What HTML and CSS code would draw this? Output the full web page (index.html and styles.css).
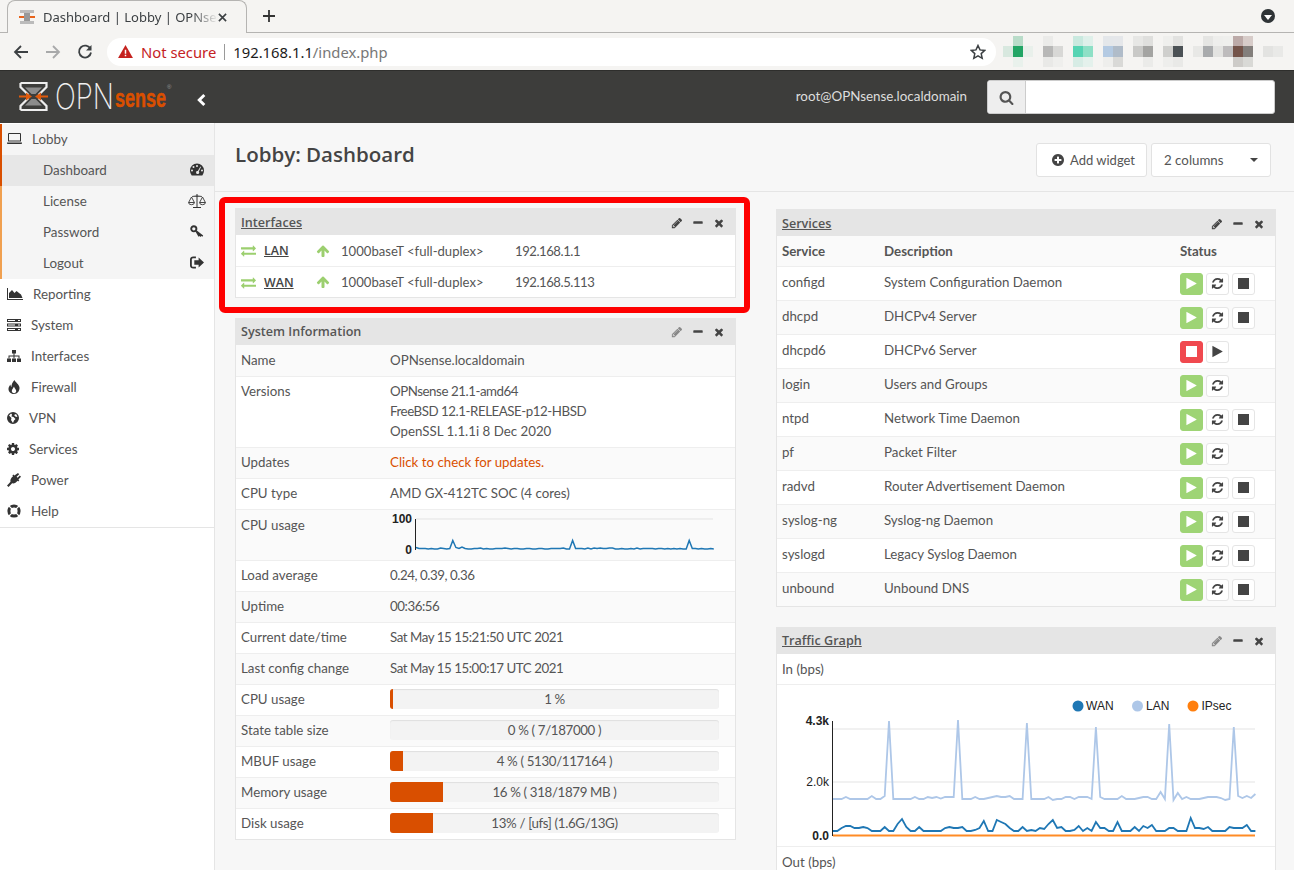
FILE: index.html
```html
<!DOCTYPE html>
<html lang="en">
<head>
    <meta charset="UTF-8">
    <meta name="viewport" content="width=device-width, initial-scale=1.0">
    <title>Dashboard | Lobby | OPNsense</title>
    <link rel="stylesheet" href="styles.css">
</head>
<body>

    <!-- Icon set -->
    <svg class="sprite" xmlns="http://www.w3.org/2000/svg">
        <symbol id="i-times" viewBox="0 0 1792 1792"><path d="M1490 1322q0 40-28 68l-136 136q-28 28-68 28t-68-28l-294-294-294 294q-28 28-68 28t-68-28l-136-136q-28-28-28-68t28-68l294-294-294-294q-28-28-28-68t28-68l136-136q28-28 68-28t68 28l294 294 294-294q28-28 68-28t68 28l136 136q28 28 28 68t-28 68l-294 294 294 294q28 28 28 68z"/></symbol>
        <symbol id="i-search" viewBox="0 0 1792 1792"><path d="M1216 832q0-185-131.5-316.5t-316.5-131.5-316.5 131.5-131.5 316.5 131.5 316.5 316.5 131.5 316.5-131.5 131.5-316.5zm512 832q0 52-38 90t-90 38q-54 0-90-38l-343-342q-179 124-399 124-143 0-273.5-55.5t-225-150-150-225-55.5-273.5 55.5-273.5 150-225 225-150 273.5-55.5 273.5 55.5 225 150 150 225 55.5 273.5q0 220-124 399l343 343q37 37 37 90z"/></symbol>
        <symbol id="i-refresh" viewBox="0 0 1792 1792"><path d="M1639 1056q0 5-1 7-64 268-268 434.5t-478 166.5q-146 0-282.5-55t-243.5-157l-129 129q-19 19-45 19t-45-19-19-45v-448q0-26 19-45t45-19h448q26 0 45 19t19 45-19 45l-137 137q71 66 161 102t187 36q134 0 250-65t186-179q11-17 53-117 8-23 30-23h192q13 0 22.5 9.5t9.5 22.5zm25-800v448q0 26-19 45t-45 19h-448q-26 0-45-19t-19-45 19-45l138-138q-148-137-349-137-134 0-250 65t-186 179q-11 17-53 117-8 23-30 23h-199q-13 0-22.5-9.5t-9.5-22.5v-7q65-268 270-434.5t480-166.5q146 0 284 55.5t245 156.5l130-129q19-19 45-19t45 19 19 45z"/></symbol>
        <symbol id="i-pencil" viewBox="0 0 1792 1792"><path d="M491 1536l91-91-235-235-91 91v107h128v128h107zm523-928q0-22-22-22-10 0-17 7l-542 542q-7 7-7 17 0 22 22 22 10 0 17-7l542-542q7-7 7-17zm-54-192l416 416-832 832h-416v-416zm683 96q0 53-37 90l-166 166-416-416 166-165q36-38 90-38 53 0 91 38l235 234q37 39 37 91z"/></symbol>
        <symbol id="i-minus" viewBox="0 0 1792 1792"><path d="M1600 736v192q0 40-28 68t-68 28h-1216q-40 0-68-28t-28-68v-192q0-40 28-68t68-28h1216q40 0 68 28t28 68z"/></symbol>
        <symbol id="i-play" viewBox="0 0 1792 1792"><path d="M1576 927l-1328 738q-23 13-39.5 3t-16.5-36v-1472q0-26 16.5-36t39.5 3l1328 738q23 13 23 31t-23 31z"/></symbol>
        <symbol id="i-up" viewBox="0 0 1792 1792"><path d="M1675 971q0 51-37 90l-75 75q-38 38-91 38-54 0-90-38l-294-293v704q0 52-37.5 84.5t-90.5 32.5h-128q-53 0-90.5-32.5t-37.5-84.5v-704l-294 293q-36 38-90 38t-90-38l-75-75q-38-38-38-90 0-53 38-91l651-651q35-37 90-37 54 0 91 37l651 651q37 39 37 91z"/></symbol>
        <symbol id="i-exchange" viewBox="0 0 1792 1792"><path d="M1792 1184v192q0 13-9.5 22.5t-22.5 9.5h-1376v192q0 13-9.5 22.5t-22.5 9.5q-12 0-24-10l-319-320q-9-9-9-22 0-14 9-23l320-320q9-9 23-9 13 0 22.5 9.5t9.5 22.5v192h1376q13 0 22.5 9.5t9.5 22.5zm0-544q0 14-9 23l-320 320q-9 9-23 9-13 0-22.5-9.5t-9.5-22.5v-192h-1376q-13 0-22.5-9.5t-9.5-22.5v-192q0-13 9.5-22.5t22.5-9.5h1376v-192q0-14 9-23t23-9q12 0 24 10l319 319q9 9 9 23z"/></symbol>
        <symbol id="i-plus" viewBox="0 0 1792 1792"><path d="M1344 960v-128q0-26-19-45t-45-19h-256v-256q0-26-19-45t-45-19h-128q-26 0-45 19t-19 45v256h-256q-26 0-45 19t-19 45v128q0 26 19 45t45 19h256v256q0 26 19 45t45 19h128q26 0 45-19t19-45v-256h256q26 0 45-19t19-45zm320-64q0 209-103 385.5t-279.5 279.5-385.5 103-385.5-103-279.5-279.5-103-385.5 103-385.5 279.5-279.5 385.5-103 385.5 103 279.5 279.5 103 385.5z"/></symbol>
        <symbol id="i-cog" viewBox="128 128 1536 1536"><path d="M1152 896q0-106-75-181t-181-75-181 75-75 181 75 181 181 75 181-75 75-181zm512-109v222q0 12-8 23t-20 13l-185 28q-19 54-39 91 35 50 107 138 10 12 10 25t-9 23q-27 37-99 108t-94 71q-12 0-26-9l-138-108q-44 23-91 38-16 136-29 186-7 28-36 28h-222q-14 0-24.5-8.5t-11.5-21.5l-28-184q-49-16-90-37l-141 107q-10 9-25 9-14 0-25-11-126-114-165-168-7-10-7-23 0-12 8-23 15-21 51-66.5t54-70.5q-27-50-41-99l-183-27q-13-2-21-12.5t-8-23.5v-222q0-12 8-23t19-13l186-28q14-46 39-92-40-57-107-138-10-12-10-24 0-10 9-23 26-36 98.5-107.5t94.5-71.5q13 0 26 10l138 107q44-23 91-38 16-136 29-186 7-28 36-28h222q14 0 24.5 8.5t11.5 21.5l28 184q49 16 90 37l142-107q9-9 24-9 13 0 25 10 129 119 165 170 7 8 7 22 0 12-8 23-15 21-51 66.5t-54 70.5q26 50 41 98l183 28q13 2 21 12.5t8 23.5z"/></symbol>
        <symbol id="i-laptop" viewBox="0 0 15 12"><path d="M2 0h11a1 1 0 0 1 1 1v7.500H1V1a1 1 0 0 1 1-1zm0 1v6.500h11V1zM0 9.600h15v.6a.8.8 0 0 1-.8.8H.8a.8.8 0 0 1-.8-.8z"/></symbol>
        <symbol id="i-area" viewBox="0 0 16 12"><path d="M0 0h1v11h15v1H0z"/><path d="M2 10V5l3-3 2.500 3 2-2 2.500 2 2 1.500 1.500 3.500z"/></symbol>
        <symbol id="i-server" viewBox="0 0 14 12"><path d="M0 0h14v3H0zM0 4.500h14v3H0zM0 9h14v3H0z"/><path fill="#fff" d="M1 1h7v1H1zM11 1h2v1h-2zM1 5.500h7v1H1zM11 5.500h2v1h-2zM1 10h7v1H1zM11 10h2v1h-2z"/></symbol>
        <symbol id="i-sitemap" viewBox="0 0 14 12"><path d="M5 0h4v3.500H7.500v2H12.500v3H11.500v-2H7.500v2h-1v-2H2.500v2h-1v-3H6.500v-2H5z"/><path d="M0 8.500h4V12H0zM5 8.500h4V12H5zM10 8.500h4V12h-4z"/></symbol>
        <symbol id="i-fire" viewBox="0 0 12 14"><path fill-rule="evenodd" d="M6.500 0c1 2.500 4.500 4 5 7.500.3 3-2 6.500-5.500 6.500C2.500 14 .2 11.300.5 8.500.7 6.800 1.800 5.500 2.500 4.500c0 1.200.3 2 1 2.500C3.200 4.500 4.800 2 6.500 0zM6 6.500c-.5 1.500-2.200 2.700-2.200 4.500 0 1.300 1 2.200 2.200 2.200s2.400-1 2.200-2.400C8 9.300 6.400 8.200 6 6.500z"/></symbol>
        <symbol id="i-globe" viewBox="0 0 12 12"><path fill-rule="evenodd" d="M6 0a6 6 0 1 1 0 12A6 6 0 0 1 6 0zM2 3.500 4.500 6 4 8l2 3 1-2.500L8.500 7 6.500 5 4.500 4.500 5 2.500 4 1.500zM9 2 7 3l2 2 1.500-.5z"/></symbol>
        <symbol id="i-plug" viewBox="0 0 14 14"><path d="M11 0l1.200 1.200-2.600 2.600 1 1 2.200-2.200L14 3.800l-2.600 2.600.9.900-1.100 1.100-.6-.6c-1.500 2-3.500 3-5.500 2.500L3 12.500 1.500 14 0 12.500 1.500 11l2-2.200C3 6.800 4 4.800 6 3.200l-.6-.6 1.100-1.100.9.900z"/></symbol>
        <symbol id="i-life" viewBox="0 0 14 14"><circle cx="7" cy="7" r="5.100" fill="none" stroke="currentColor" stroke-width="3"/><path fill="none" stroke="#fff" stroke-width="1.100" d="M2 2l3 3M12 2 9 5M2 12l3-3M12 12 9 9"/></symbol>
        <symbol id="i-gauge" viewBox="0 0 14 12"><path fill-rule="evenodd" d="M7 0a7 7 0 0 1 7 7c0 1.800-.6 3.500-1.700 5H1.700A7.600 7.600 0 0 1 0 7a7 7 0 0 1 7-7zM3.500 2.500a1 1 0 1 0 0 2 1 1 0 0 0 0-2zM7 1.500a1 1 0 1 0 0 2 1 1 0 0 0 0-2zM2 6a1 1 0 1 0 0 2 1 1 0 0 0 0-2zM12 6a1 1 0 1 0 0 2 1 1 0 0 0 0-2zM10.500 3 7.800 7.500a1.500 1.500 0 1 0 1 .6l2.200-4.600z"/></symbol>
        <symbol id="i-scale" viewBox="0 0 18 14"><path d="M8.500 0h1v1.500l4.500.500v.8h-4.500V13H13v1H5v-1h3.500V2.800H4V2l4.500-.5z"/><path fill="none" stroke="currentColor" stroke-width=".9" d="M.6 8.500 3.500 3l2.900 5.500zM.6 8.500a2.900 2.200 0 0 0 5.800 0M11.600 8.500 14.500 3l2.900 5.500zM11.600 8.500a2.900 2.200 0 0 0 5.800 0"/></symbol>
        <symbol id="i-key" viewBox="0 0 14 13"><circle cx="3.800" cy="3.800" r="2.600" fill="none" stroke="currentColor" stroke-width="1.900"/><path d="M5.600 6.800l1.200-1.200 6.400 5-.8 1.200-1.100-.8-.9 1-1-1-.9.800z"/></symbol>
        <symbol id="i-signout" viewBox="0 0 13 11"><path d="M3 0h2.500v1.500H3c-.8 0-1.300.5-1.300 1.300v5.400c0 .8.500 1.300 1.300 1.300h2.500V11H3C1.300 11 0 9.800 0 8.200V2.800C0 1.200 1.300 0 3 0z"/><path d="M8 .8 13 5.500 8 10.200V7.500H4v-4h4z"/></symbol>
    </svg>

    <!-- Browser chrome -->
    <div class="tabstrip">
        <div class="tab">
            <svg class="favicon" viewBox="0 0 16 16">
                <path fill="#bbb" d="M1 1h14v3H1zM1 12h14v3H1z"/>
                <path fill="#999" d="M5 4h6v8H5z"/>
                <path fill="#e8641c" d="M0 7h5v2H0zM11 7h5v2h-5z"/>
            </svg>
            <span class="tab-title">Dashboard | Lobby | OPNsense</span>
            <svg class="tab-close" viewBox="0 0 10 10"><path d="M1 1l8 8M9 1l-8 8"/></svg>
        </div>
        <svg class="tab-new" viewBox="0 0 12 12"><path d="M6 0v12M0 6h12"/></svg>
        <div class="tab-menu"><span class="tab-menu-caret"></span></div>
    </div>
    <div class="toolbar">
        <svg class="tool" viewBox="0 0 16 16"><path d="M15 8H2M8 2 2 8l6 6"/></svg>
        <svg class="tool tool-off" viewBox="0 0 16 16"><path d="M1 8h13M8 2l6 6-6 6"/></svg>
        <svg class="tool" viewBox="0 0 16 16"><path d="M13.500 5A6 6 0 1 0 14 8.500"/><path class="tool-fill" d="M14.500 1v5.500H9z"/></svg>
        <div class="omnibox">
            <svg class="warn" viewBox="0 0 16 14"><path fill="#c5221f" d="M8 0l8 14H0z"/><path fill="#fff" d="M7.200 5h1.600v4.500H7.200zM7.200 10.500h1.600V12H7.200z"/></svg>
            <span class="not-secure">Not secure</span>
            <span class="omni-sep"></span>
            <span class="url">192.168.1.1<span class="url-path">/index.php</span></span>
            <svg class="star" viewBox="0 0 16 16"><path d="M8 1.500l2 4.400 4.800.5-3.600 3.200 1 4.700L8 11.900l-4.200 2.400 1-4.700L1.200 6.400 6 5.900z"/></svg>
        </div>
        <svg class="extensions" viewBox="0 0 280 31">
            <g id="mosaic">
                <rect x="0" y="10" width="10" height="11" fill="#d8e8df"/>
                <rect x="10" y="0" width="10" height="10" fill="#b9dcc9"/><rect x="10" y="10" width="10" height="11" fill="#22a565"/><rect x="10" y="21" width="10" height="10" fill="#e9f1ec"/>
                <rect x="20" y="10" width="10" height="11" fill="#e9f0eb"/>
                <rect x="40" y="0" width="10" height="10" fill="#ebebe9"/><rect x="40" y="10" width="10" height="11" fill="#b8b8b7"/><rect x="40" y="21" width="10" height="10" fill="#e9e9e7"/>
                <rect x="50" y="10" width="10" height="11" fill="#d8d8d6"/><rect x="50" y="21" width="10" height="10" fill="#efefed"/>
                <rect x="70" y="0" width="10" height="10" fill="#c9e9df"/><rect x="70" y="10" width="10" height="11" fill="#55d4b3"/><rect x="70" y="21" width="10" height="10" fill="#d7ece5"/>
                <rect x="80" y="0" width="10" height="10" fill="#dff0ea"/><rect x="80" y="10" width="10" height="11" fill="#8ee0c6"/><rect x="80" y="21" width="10" height="10" fill="#e4f1ec"/>
                <rect x="100" y="0" width="10" height="10" fill="#e4e7ea"/><rect x="100" y="10" width="10" height="11" fill="#b4cae2"/><rect x="100" y="21" width="10" height="10" fill="#eeeeec"/>
                <rect x="110" y="0" width="10" height="10" fill="#e5e7ea"/><rect x="110" y="10" width="10" height="11" fill="#b0bcc9"/><rect x="110" y="21" width="10" height="10" fill="#d9d9d7"/>
                <rect x="130" y="0" width="10" height="10" fill="#e7e7e5"/><rect x="130" y="10" width="10" height="11" fill="#c9c9c7"/>
                <rect x="140" y="0" width="10" height="10" fill="#dfdfdd"/><rect x="140" y="10" width="10" height="11" fill="#a4a4a2"/><rect x="140" y="21" width="10" height="10" fill="#ebebe9"/>
                <rect x="160" y="0" width="10" height="10" fill="#efefed"/><rect x="160" y="10" width="10" height="11" fill="#cfcfcd"/><rect x="160" y="21" width="10" height="10" fill="#eeeeec"/>
                <rect x="170" y="0" width="10" height="10" fill="#e2e2e0"/><rect x="170" y="10" width="10" height="11" fill="#4b5155"/><rect x="170" y="21" width="10" height="10" fill="#e9e9e7"/>
                <rect x="190" y="10" width="10" height="11" fill="#e8e8e6"/>
                <rect x="200" y="0" width="10" height="10" fill="#e5e5e3"/><rect x="200" y="10" width="10" height="11" fill="#a9abad"/>
                <rect x="210" y="0" width="10" height="10" fill="#eeeeec"/><rect x="210" y="10" width="10" height="11" fill="#e3e3e1"/>
                <rect x="220" y="0" width="10" height="10" fill="#efefed"/><rect x="220" y="10" width="10" height="11" fill="#bebcbd"/>
                <rect x="230" y="0" width="10" height="10" fill="#bcaaa8"/><rect x="230" y="10" width="10" height="11" fill="#735349"/><rect x="230" y="21" width="10" height="10" fill="#cdcbc8"/>
                <rect x="240" y="0" width="10" height="10" fill="#d7ccc9"/><rect x="240" y="10" width="10" height="11" fill="#837f7c"/><rect x="240" y="21" width="10" height="10" fill="#d9d9d6"/>
                <rect x="260" y="10" width="10" height="11" fill="#e3e3e1"/>
                <rect x="270" y="10" width="10" height="11" fill="#e9e9e7"/>
            </g>
        </svg>
    </div>

    <!-- Top navigation -->
    <header class="navbar">
        <svg class="logo" viewBox="0 0 160 36">
            <path fill="none" stroke="#eee" stroke-width="2.200" d="M1.500 2h26v4l-8 8M1.500 2v4l8 8M1.500 29h26v-4l-8-8M1.500 29v-4l8-8"/>
            <path fill="#8c8c8c" d="M6 6.500h17l-6.500 6.500h-4zM12.500 18h4l6.500 6.500H6z"/>
            <path fill="#e05a0c" d="M0 14.500h7V11.500l6 4-6 4V16.500H0zM29 14.500h-7V11.500l-6 4 6 4V16.500h7z"/>
            <text class="logo-opn" x="36" y="28" textLength="59" lengthAdjust="spacingAndGlyphs">OPN</text>
            <text class="logo-sense" x="96" y="26" textLength="51" lengthAdjust="spacingAndGlyphs">sense</text>
            <text class="logo-reg" x="148" y="8">®</text>
        </svg>
        <svg class="collapse" viewBox="0 0 8 12"><path d="M6.500 1.500 2 6l4.500 4.500"/></svg>
        <span class="navbar-user">root@OPNsense.localdomain</span>
        <div class="search">
            <span class="search-addon"><svg class="icon-search"><use href="#i-search"/></svg></span>
            <span class="search-input"></span>
        </div>
    </header>

    <div class="main">
        <!-- Sidebar -->
        <nav class="sidebar">
            <div class="nav-group">
                <a class="nav-item nav-open"><svg class="nav-icon w15"><use href="#i-laptop"/></svg>Lobby</a>
                <a class="sub-item sub-active">Dashboard<svg class="sub-icon"><use href="#i-gauge"/></svg></a>
                <a class="sub-item">License<svg class="sub-icon sub-wide"><use href="#i-scale"/></svg></a>
                <a class="sub-item">Password<svg class="sub-icon"><use href="#i-key"/></svg></a>
                <a class="sub-item">Logout<svg class="sub-icon"><use href="#i-signout"/></svg></a>
            </div>
            <a class="nav-item"><svg class="nav-icon w16"><use href="#i-area"/></svg>Reporting</a>
            <a class="nav-item"><svg class="nav-icon w14"><use href="#i-server"/></svg>System</a>
            <a class="nav-item"><svg class="nav-icon w14"><use href="#i-sitemap"/></svg>Interfaces</a>
            <a class="nav-item"><svg class="nav-icon w14 tall"><use href="#i-fire"/></svg>Firewall</a>
            <a class="nav-item"><svg class="nav-icon w12"><use href="#i-globe"/></svg>VPN</a>
            <a class="nav-item"><svg class="nav-icon w12"><use href="#i-cog"/></svg>Services</a>
            <a class="nav-item"><svg class="nav-icon w14 tall"><use href="#i-plug"/></svg>Power</a>
            <a class="nav-item"><svg class="nav-icon w14 tall"><use href="#i-life"/></svg>Help</a>
        </nav>

        <div class="content">
            <div class="page-head">
                <h1 class="page-title">Lobby: Dashboard</h1>
                <div class="page-actions">
                    <button class="btn btn-add"><svg class="icon-plus"><use href="#i-plus"/></svg>Add widget</button>
                    <button class="btn btn-cols">2 columns<span class="caret"></span></button>
                </div>
            </div>

            <div class="columns">
                <div class="col">
                    <div class="highlight">
                        <section class="widget">
                            <div class="widget-head head-low">
                                <a class="widget-title linked">Interfaces</a>
                                <svg class="wicon"><use href="#i-pencil"/></svg>
                                <svg class="wicon"><use href="#i-minus"/></svg>
                                <svg class="wicon"><use href="#i-times"/></svg>
                            </div>
                            <div class="iface-row">
                                <svg class="iface-swap"><use href="#i-exchange"/></svg>
                                <a class="iface-name">LAN</a>
                                <svg class="iface-up"><use href="#i-up"/></svg>
                                <span>1000baseT &lt;full-duplex&gt;</span>
                                <span class="num">192.168.1.1</span>
                            </div>
                            <div class="iface-row">
                                <svg class="iface-swap"><use href="#i-exchange"/></svg>
                                <a class="iface-name">WAN</a>
                                <svg class="iface-up"><use href="#i-up"/></svg>
                                <span>1000baseT &lt;full-duplex&gt;</span>
                                <span class="num">192.168.5.113</span>
                            </div>
                        </section>
                    </div>

                    <section class="widget">
                        <div class="widget-head">
                            <span class="widget-title">System Information</span>
                            <svg class="wicon wicon-dim"><use href="#i-pencil"/></svg>
                            <svg class="wicon"><use href="#i-minus"/></svg>
                            <svg class="wicon"><use href="#i-times"/></svg>
                        </div>
                        <div class="info-row"><span>Name</span><span>OPNsense.localdomain</span></div>
                        <div class="info-row info-tall">
                            <span>Versions</span>
                            <span><span class="num">OPNsense 21.1-amd64</span><br><span class="num">FreeBSD 12.1-RELEASE-p12-HBSD</span><br>OpenSSL 1.1.1i 8 Dec 2020</span>
                        </div>
                        <div class="info-row"><span>Updates</span><a class="update-link">Click to check for updates.</a></div>
                        <div class="info-row"><span>CPU type</span><span>AMD GX-412TC SOC (4 cores)</span></div>
                        <div class="info-row info-chart">
                            <span>CPU usage</span>
                            <svg class="cpu-chart" viewBox="0 0 330 51">
                                <line class="grid-line" x1="26" y1="10" x2="323" y2="10"/>
                                <polyline id="cpuLine" class="cpu-line" points=""/>
                                <line class="axis-line" x1="25.500" y1="10" x2="25.500" y2="41"/>
                                <text class="cpu-label" x="22" y="14" text-anchor="end">100</text>
                                <text class="cpu-label" x="22" y="45" text-anchor="end">0</text>
                            </svg>
                        </div>
                        <div class="info-row"><span>Load average</span><span class="num">0.24, 0.39, 0.36</span></div>
                        <div class="info-row"><span>Uptime</span><span class="num">00:36:56</span></div>
                        <div class="info-row"><span>Current date/time</span><span class="num">Sat May 15 15:21:50 UTC 2021</span></div>
                        <div class="info-row"><span>Last config change</span><span class="num">Sat May 15 15:00:17 UTC 2021</span></div>
                        <div class="info-row"><span>CPU usage</span><div class="bar"><div class="bar-fill" style="width:1%"></div><span class="bar-text">1 %</span></div></div>
                        <div class="info-row"><span>State table size</span><div class="bar"><div class="bar-fill" style="width:0%"></div><span class="bar-text">0 % ( 7/187000 )</span></div></div>
                        <div class="info-row"><span>MBUF usage</span><div class="bar"><div class="bar-fill" style="width:4%"></div><span class="bar-text">4 % ( 5130/117164 )</span></div></div>
                        <div class="info-row"><span>Memory usage</span><div class="bar"><div class="bar-fill" style="width:16%"></div><span class="bar-text">16 % ( 318/1879 MB )</span></div></div>
                        <div class="info-row"><span>Disk usage</span><div class="bar"><div class="bar-fill" style="width:13%"></div><span class="bar-text">13% / [ufs] (1.6G/13G)</span></div></div>
                    </section>
                </div>

                <div class="col col-right">
                    <section class="widget">
                        <div class="widget-head head-low">
                            <a class="widget-title linked">Services</a>
                            <svg class="wicon"><use href="#i-pencil"/></svg>
                            <svg class="wicon"><use href="#i-minus"/></svg>
                            <svg class="wicon"><use href="#i-times"/></svg>
                        </div>
                        <div class="svc-row svc-head"><span>Service</span><span>Description</span><span>Status</span></div>
                        <div class="svc-row"><span>configd</span><span>System Configuration Daemon</span><div class="svc-btns"><i class="sbtn sbtn-on"><svg><use href="#i-play"/></svg></i><i class="sbtn"><svg><use href="#i-refresh"/></svg></i><i class="sbtn"><b class="square"></b></i></div></div>
                        <div class="svc-row"><span>dhcpd</span><span>DHCPv4 Server</span><div class="svc-btns"><i class="sbtn sbtn-on"><svg><use href="#i-play"/></svg></i><i class="sbtn"><svg><use href="#i-refresh"/></svg></i><i class="sbtn"><b class="square"></b></i></div></div>
                        <div class="svc-row"><span>dhcpd6</span><span>DHCPv6 Server</span><div class="svc-btns"><i class="sbtn sbtn-off"><b class="square"></b></i><i class="sbtn"><svg><use href="#i-play"/></svg></i></div></div>
                        <div class="svc-row"><span>login</span><span>Users and Groups</span><div class="svc-btns"><i class="sbtn sbtn-on"><svg><use href="#i-play"/></svg></i><i class="sbtn"><svg><use href="#i-refresh"/></svg></i></div></div>
                        <div class="svc-row"><span>ntpd</span><span>Network Time Daemon</span><div class="svc-btns"><i class="sbtn sbtn-on"><svg><use href="#i-play"/></svg></i><i class="sbtn"><svg><use href="#i-refresh"/></svg></i><i class="sbtn"><b class="square"></b></i></div></div>
                        <div class="svc-row"><span>pf</span><span>Packet Filter</span><div class="svc-btns"><i class="sbtn sbtn-on"><svg><use href="#i-play"/></svg></i><i class="sbtn"><svg><use href="#i-refresh"/></svg></i></div></div>
                        <div class="svc-row"><span>radvd</span><span>Router Advertisement Daemon</span><div class="svc-btns"><i class="sbtn sbtn-on"><svg><use href="#i-play"/></svg></i><i class="sbtn"><svg><use href="#i-refresh"/></svg></i><i class="sbtn"><b class="square"></b></i></div></div>
                        <div class="svc-row"><span>syslog-ng</span><span>Syslog-ng Daemon</span><div class="svc-btns"><i class="sbtn sbtn-on"><svg><use href="#i-play"/></svg></i><i class="sbtn"><svg><use href="#i-refresh"/></svg></i><i class="sbtn"><b class="square"></b></i></div></div>
                        <div class="svc-row"><span>syslogd</span><span>Legacy Syslog Daemon</span><div class="svc-btns"><i class="sbtn sbtn-on"><svg><use href="#i-play"/></svg></i><i class="sbtn"><svg><use href="#i-refresh"/></svg></i><i class="sbtn"><b class="square"></b></i></div></div>
                        <div class="svc-row"><span>unbound</span><span>Unbound DNS</span><div class="svc-btns"><i class="sbtn sbtn-on"><svg><use href="#i-play"/></svg></i><i class="sbtn"><svg><use href="#i-refresh"/></svg></i><i class="sbtn"><b class="square"></b></i></div></div>
                    </section>

                    <section class="widget">
                        <div class="widget-head">
                            <a class="widget-title linked">Traffic Graph</a>
                            <svg class="wicon wicon-dim"><use href="#i-pencil"/></svg>
                            <svg class="wicon"><use href="#i-minus"/></svg>
                            <svg class="wicon"><use href="#i-times"/></svg>
                        </div>
                        <div class="traffic-label">In (bps)</div>
                        <svg class="traffic-chart" viewBox="0 0 498 161">
                            <circle cx="301" cy="21" r="5.500" fill="#1f77b4"/><text class="legend" x="309" y="25">WAN</text>
                            <circle cx="360.500" cy="21" r="5.500" fill="#aec7e8"/><text class="legend" x="369" y="25">LAN</text>
                            <circle cx="416" cy="21" r="5.500" fill="#ff7f0e"/><text class="legend" x="424.500" y="25">IPsec</text>
                            <line class="grid-line" x1="56" y1="44" x2="478" y2="44"/>
                            <line class="grid-line" x1="56" y1="97" x2="478" y2="97"/>
                            <polyline id="lanLine" class="traffic-line lan" points=""/>
                            <polyline id="wanLine" class="traffic-line wan" points=""/>
                            <line class="ipsec-line" x1="56" y1="150.500" x2="478" y2="150.500"/>
                            <line class="axis-line" x1="55.500" y1="36" x2="55.500" y2="151"/>
                            <text class="axis-label bold" x="52" y="40" text-anchor="end">4.3k</text>
                            <text class="axis-label" x="52" y="101" text-anchor="end">2.0k</text>
                            <text class="axis-label bold" x="52" y="155" text-anchor="end">0.0</text>
                        </svg>
                        <div class="traffic-label">Out (bps)</div>
                    </section>
                </div>
            </div>
        </div>
    </div>

    <script src="charts.js"></script>
</body>
</html>
```

FILE: styles.css
```css
/* Page */
html, body {
    margin: 0;
    padding: 0;
    height: 870px;
    overflow: hidden;
}

body {
    font-family: "Lato", "Open Sans", sans-serif;
    font-size: 13.3px;
    color: #555;
    background-color: #f7f7f7;
    display: flex;
    flex-direction: column;
}

.sprite {
    display: none;
}

svg {
    fill: currentColor;
    display: block;
    flex: none;
}

/* Lato digits run wider than the rest of the text */
.num {
    letter-spacing: -0.45px;
}

/* Browser chrome */
.tabstrip {
    height: 33px;
    background-color: #f5f4f2;
    display: flex;
    align-items: center;
    padding-left: 7px;
    box-sizing: border-box;
    border-bottom: 1px solid #b5b4b2;
    flex: none;
    font-family: "Noto Sans", sans-serif;
}

.tab {
    width: 240px;
    height: 33px;
    box-sizing: border-box;
    background-color: #f5f4f2;
    border: 1px solid #b5b4b2;
    border-bottom: none;
    border-radius: 8px 8px 0 0;
    display: flex;
    align-items: center;
    padding: 0 11px;
    align-self: flex-start;
    color: #3c4043;
    font-size: 13px;
}

.favicon {
    width: 16px;
    height: 16px;
    margin-right: 8px;
}

.tab-title {
    width: 175px;
    white-space: nowrap;
    overflow: hidden;
    -webkit-mask-image: linear-gradient(to right, #000 85%, transparent);
    mask-image: linear-gradient(to right, #000 85%, transparent);
}

.tab-close {
    width: 9px;
    height: 9px;
    fill: none;
    stroke: #3c4043;
    stroke-width: 1.800;
}

.tab-new {
    width: 12px;
    height: 12px;
    margin-left: 16px;
    fill: none;
    stroke: #333;
    stroke-width: 1.800;
}

.tab-menu {
    margin-left: auto;
    margin-right: 19px;
    width: 14px;
    height: 14px;
    border-radius: 50%;
    background-color: #2f3437;
    display: flex;
    align-items: center;
    justify-content: center;
}

.tab-menu-caret {
    width: 0;
    height: 0;
    border-left: 4px solid transparent;
    border-right: 4px solid transparent;
    border-top: 5px solid #fff;
    margin-top: 2px;
}

.toolbar {
    height: 37px;
    background-color: #f5f4f2;
    border-bottom: 1px solid #2e2e2c;
    box-sizing: content-box;
    display: flex;
    align-items: center;
    padding-left: 13px;
    flex: none;
}

.tool {
    width: 16px;
    height: 16px;
    margin-right: 16px;
    fill: none;
    stroke: #3c4043;
    stroke-width: 1.800;
}

.tool-off {
    stroke: #a8a9aa;
}

.tool-fill {
    fill: #3c4043;
    stroke: none;
}

.omnibox {
    width: 889px;
    height: 28px;
    margin-left: -2px;
    background-color: #fff;
    border-radius: 14px;
    display: flex;
    align-items: center;
    padding-left: 11px;
    box-sizing: border-box;
    font-family: "Noto Sans", sans-serif;
    font-size: 14.800px;
}

.warn {
    width: 15px;
    height: 13px;
    margin-right: 8px;
}

.not-secure {
    color: #c5221f;
}

.omni-sep {
    width: 1px;
    height: 16px;
    background-color: #9a9a9a;
    margin: 0 8px 0 8px;
}

.url {
    color: #1c1c1c;
}

.url-path {
    color: #777;
}

.star {
    width: 16px;
    height: 16px;
    margin-left: auto;
    margin-right: 10px;
    fill: none;
    stroke: #3c4043;
    stroke-width: 1.500;
}

.extensions {
    width: 280px;
    height: 31px;
    margin-left: 7px;
}

/* Top navigation */
.navbar {
    height: 52px;
    background-color: #3d3d3b;
    display: flex;
    align-items: center;
    flex: none;
    padding-left: 19px;
    color: #ddd;
}

.logo {
    width: 160px;
    height: 36px;
    margin-top: 3px;
    overflow: visible;
}

.logo-opn {
    font-family: "Inter", sans-serif;
    font-weight: 200;
    font-size: 35px;
    fill: #f0f0f0;
}

.logo-sense {
    font-family: "Liberation Sans", sans-serif;
    font-weight: 700;
    font-size: 25px;
    fill: #d94f00;
    stroke: #d94f00;
    stroke-width: 0.5px;
}

.logo-reg {
    font-family: "Liberation Sans", sans-serif;
    font-size: 6px;
    fill: #999;
}

.collapse {
    width: 9px;
    height: 14px;
    margin-left: 18px;
    margin-top: 5px;
    fill: none;
    stroke: #fff;
    stroke-width: 2.600;
}

.navbar-user {
    margin-left: auto;
    font-size: 13.400px;
    padding-bottom: 2px;
}

.search {
    display: flex;
    width: 288px;
    height: 34px;
    margin: 0 19px 0 20px;
    border: 1px solid #ccc;
    border-radius: 3px;
    box-sizing: border-box;
    background-color: #fff;
    overflow: hidden;
}

.search-addon {
    width: 38px;
    box-sizing: border-box;
    background-color: #eee;
    border-right: 1px solid #ccc;
    display: flex;
    align-items: center;
    justify-content: center;
}

.icon-search {
    width: 15px;
    height: 15px;
    color: #555;
}

/* Layout below the navbar */
.main {
    display: flex;
    flex: 1;
    min-height: 0;
}

/* Sidebar */
.sidebar {
    width: 215px;
    box-sizing: border-box;
    background-color: #fff;
    border-right: 1px solid #e5e5e5;
    flex: none;
    padding-top: 1px;
    font-size: 13.400px;
}

.sidebar::after {
    content: "";
    display: block;
    border-top: 1px solid #e5e5e5;
}

.nav-group {
    background-color: #f5f5f5;
    border-left: 2px solid #f0a050;
}

.nav-item {
    height: 31px;
    box-sizing: border-box;
    display: flex;
    align-items: center;
    padding: 0 0 2px 7px;
    gap: 10px;
    color: #555;
}

.nav-open {
    padding-left: 5px;
    margin-left: -2px;
    border-left: 2px solid #d94f00;
}

.nav-icon {
    height: 12px;
    color: #333;
}

.tall {
    height: 14px;
}

.w12 { width: 12px; }
.w14 { width: 14px; }
.w15 { width: 15px; }
.w16 { width: 16px; }

.sub-item {
    height: 31px;
    box-sizing: border-box;
    display: flex;
    align-items: center;
    justify-content: space-between;
    padding: 0 10px 2px 41px;
    color: #555;
}

.sub-active {
    background-color: #e7e7e7;
    margin-left: -2px;
    padding-left: 41px;
    border-left: 2px solid #d94f00;
}

.sub-icon {
    width: 14px;
    height: 13px;
    color: #333;
}

.sub-wide {
    width: 18px;
    height: 14px;
    margin-right: -2px;
    margin-left: -2px;
}

/* Content area */
.content {
    flex: 1;
    min-width: 0;
}

.page-head {
    height: 68px;
    box-sizing: content-box;
    padding: 0 23px 0 20px;
    border-bottom: 1px solid #e5e5e5;
    display: flex;
    align-items: center;
    justify-content: space-between;
}

.page-title {
    margin: 0 0 6px 0;
    font-family: "Open Sans", sans-serif;
    font-size: 20.500px;
    font-weight: 600;
    color: #444;
}

.page-actions {
    display: flex;
    gap: 4px;
    margin-top: 6px;
}

.btn {
    height: 34px;
    background-color: #fff;
    border: 1px solid #e2e2e2;
    border-radius: 3px;
    font-family: inherit;
    font-size: 13.300px;
    color: #555;
    display: flex;
    align-items: center;
    box-sizing: border-box;
    padding-bottom: 2px;
}

.btn-add {
    width: 111px;
    padding-left: 14px;
    padding-right: 0;
    font-size: 13px;
}

.icon-plus {
    width: 14px;
    height: 14px;
    margin-right: 5px;
    color: #444;
}

.btn-cols {
    width: 120px;
    padding-left: 12px;
    padding-right: 12px;
    justify-content: space-between;
}

.caret {
    width: 0;
    height: 0;
    border-left: 4px solid transparent;
    border-right: 4px solid transparent;
    border-top: 4px solid #444;
}

.columns {
    display: grid;
    grid-template-columns: 501px 500px;
    gap: 40px;
    padding: 16px 0 0 20px;
}

.col {
    display: flex;
    flex-direction: column;
    gap: 20px;
}

.col-right {
    padding-top: 1px;
}

/* Red marker around the interfaces widget */
.highlight {
    position: relative;
}

.highlight::after {
    content: "";
    position: absolute;
    top: -11px;
    left: -16px;
    right: -14px;
    bottom: -15px;
    border: 6px solid #fe0000;
    border-radius: 6px;
}

/* Widgets */
.widget {
    background-color: #fff;
    border: 1px solid #e5e5e5;
    border-top: none;
}

.widget-head {
    height: 27px;
    margin: 0 -1px;
    background-color: #e5e5e5;
    display: flex;
    align-items: center;
    gap: 9px;
    padding: 0 11px 0 6px;
    box-sizing: border-box;
}

.head-low {
    padding-top: 2px;
}

.widget-title {
    font-family: "Open Sans", sans-serif;
    font-size: 12.600px;
    font-weight: 600;
    color: #555;
    margin-right: auto;
}

.linked {
    text-decoration: underline;
}

.wicon {
    width: 12px;
    height: 12px;
    color: #444;
}

.wicon-dim {
    color: #888;
}

.iface-row {
    height: 31px;
    display: grid;
    grid-template-columns: 23px 52px 25px 174px 1fr;
    align-items: center;
    padding-left: 5px;
    box-sizing: border-box;
    font-size: 13.100px;
}

.iface-row + .iface-row {
    border-top: 1px solid #eee;
}

.iface-swap {
    width: 15px;
    height: 15px;
    color: #9ccf6f;
}

.iface-name {
    font-family: "Open Sans", sans-serif;
    font-size: 12.400px;
    font-weight: 600;
    text-decoration: underline;
    color: #444;
}

.iface-up {
    width: 14px;
    height: 14px;
    color: #9ccf6f;
}

.info-row {
    min-height: 31px;
    display: grid;
    grid-template-columns: 149px 1fr;
    align-items: center;
    padding: 0 17px 2px 5px;
    box-sizing: border-box;
    border-top: 1px solid #eee;
}

.info-row:nth-of-type(even) {
    background-color: #fafafa;
}

.widget-head + .info-row {
    border-top: none;
}

.info-tall {
    align-items: start;
    padding-top: 4px;
    padding-bottom: 6px;
    line-height: 20px;
}

.info-chart {
    height: 51px;
    align-items: start;
    padding-top: 7px;
}

.cpu-chart {
    width: 330px;
    height: 51px;
    margin: -8px 0 0 0;
    overflow: visible;
}

.update-link {
    color: #d94f00;
}

.bar {
    position: relative;
    height: 20px;
    background-color: #f3f3f3;
    border-radius: 3px;
    box-shadow: inset 0 1px 1px rgba(0, 0, 0, 0.08);
    overflow: hidden;
    margin-right: -1px;
}

.bar-fill {
    height: 100%;
    background-color: #d94f00;
}

.bar-text {
    position: absolute;
    inset: 0;
    text-align: center;
    line-height: 20px;
    letter-spacing: -0.35px;
}

/* Services */
.svc-row {
    height: 34px;
    display: grid;
    grid-template-columns: 102px 296px 1fr;
    align-items: center;
    padding: 0 0 4px 5px;
    box-sizing: border-box;
    border-top: 1px solid #eee;
}

.svc-row:nth-of-type(even) {
    background-color: #fafafa;
}

.svc-head {
    height: 30px;
    border-top: none;
    padding-bottom: 0;
    font-weight: 700;
}

.svc-btns {
    display: flex;
    gap: 3px;
    margin-bottom: -4px;
}

.sbtn {
    width: 23px;
    height: 22px;
    box-sizing: border-box;
    border: 1px solid #e5e5e5;
    border-radius: 3px;
    background-color: #fff;
    display: flex;
    align-items: center;
    justify-content: center;
    color: #444;
}

.sbtn svg {
    width: 13px;
    height: 13px;
}

.sbtn-on {
    background-color: #9ed475;
    border-color: #9ed475;
    color: #fff;
}

.sbtn-off {
    background-color: #f0494f;
    border-color: #f0494f;
    color: #fff;
}

.square {
    width: 11px;
    height: 11px;
    background-color: currentColor;
}

/* Traffic graph */
.traffic-label {
    height: 30px;
    line-height: 30px;
    padding-left: 5px;
}

.traffic-chart {
    width: 498px;
    height: 161px;
    border-top: 1px solid #eee;
    border-bottom: 1px solid #eee;
}

.legend {
    font-family: "Liberation Sans", sans-serif;
    font-size: 12px;
    fill: #222;
}

.grid-line {
    stroke: #e3e3e3;
    stroke-width: 1;
}

.axis-line {
    stroke: #222;
    stroke-width: 1;
}

.axis-label {
    font-family: "Liberation Sans", sans-serif;
    font-size: 12px;
    fill: #222;
}

.bold {
    font-weight: 700;
}

.traffic-line {
    fill: none;
    stroke-width: 1.800;
}

.lan {
    stroke: #aec7e8;
}

.wan {
    stroke: #1f77b4;
}

.ipsec-line {
    stroke: #ff7f0e;
    stroke-width: 2;
    opacity: 0.9;
}

.cpu-line {
    fill: none;
    stroke: #1f77b4;
    stroke-width: 1.500;
}

.cpu-label {
    font-family: "Liberation Sans", sans-serif;
    font-size: 12px;
    font-weight: 700;
    fill: #222;
}
```

FILE: charts.js
```js
// Height above the baseline, in pixels, per sample
var lanData = [0,0,0,2,0,0,0,0,0,3,0,0,3,78,0,0,0,0,0,2,0,0,2,1,2,0.5,2,2,2,79,0,0,0,2,0,0,1,2,3,2,2,3,0,0,0,76,0,0,0,0,2,-1,0,0,2,2,0,2,2,2,0,72,2,0,0,0,0,3,0,0,0,1,2,2,0,0,7,0,75,-1,6,0,2,0,0,0,1,2,2,2,1,-1,0,72,3,1,3,1,5];
var wanData = [0,0,3,5,5,3,3,4,3,0,0,0,4,0,0,7,12,4,0,0,4,0,0,0,0,0,3,4,3,3,4,0,0,1,3,10,0,0,11,9,7,3,0,0,4,0,1,0,3,2,7,11,3,4,0,0,1,5,0,3,0,9,3,3,0,0,9,0,0,0,4,0,5,3,6,0,0,0,3,3,0,0,0,13,3,3,2,4,0,0,0,0,4,3,3,3,6,0,0];
var cpuData = [2,1,1,1,0.5,1,0.5,0.5,1.5,1,0.5,1,9,2,1,2.5,1,0.5,0.5,1,1,1.5,0.5,1,0.5,0.5,1,1,1,1.5,1,0.5,1,1,0.5,0.5,1,1,0.5,0.5,1,1,0.5,0.5,1,1,1,1,1.5,0.5,0.5,9,1,1,1,0.5,1.5,0.5,1.5,1,1.5,1,1,1.5,1.5,0.5,0.5,1,0.5,0.5,1,0.5,1.5,0.5,1,1,1,1,0.5,1,1,0.5,1,0.5,1,0.5,1,0.5,0.5,9,1,1,0.5,1,0.5,0.5,1,0.5];

function plot(id, data, startX, stepX, baseY) {
    var points = [];
    for (var i = 0; i < data.length; i++) {
        var x = startX + stepX * i;
        points.push(x.toFixed(1) + ',' + (baseY - data[i]).toFixed(1));
    }
    document.getElementById(id).setAttribute('points', points.join(' '));
}

plot('lanLine', lanData, 56, 4.31, 114);
plot('wanLine', wanData, 56, 4.31, 146);
plot('cpuLine', cpuData, 26, 3.07, 40.5);
```
